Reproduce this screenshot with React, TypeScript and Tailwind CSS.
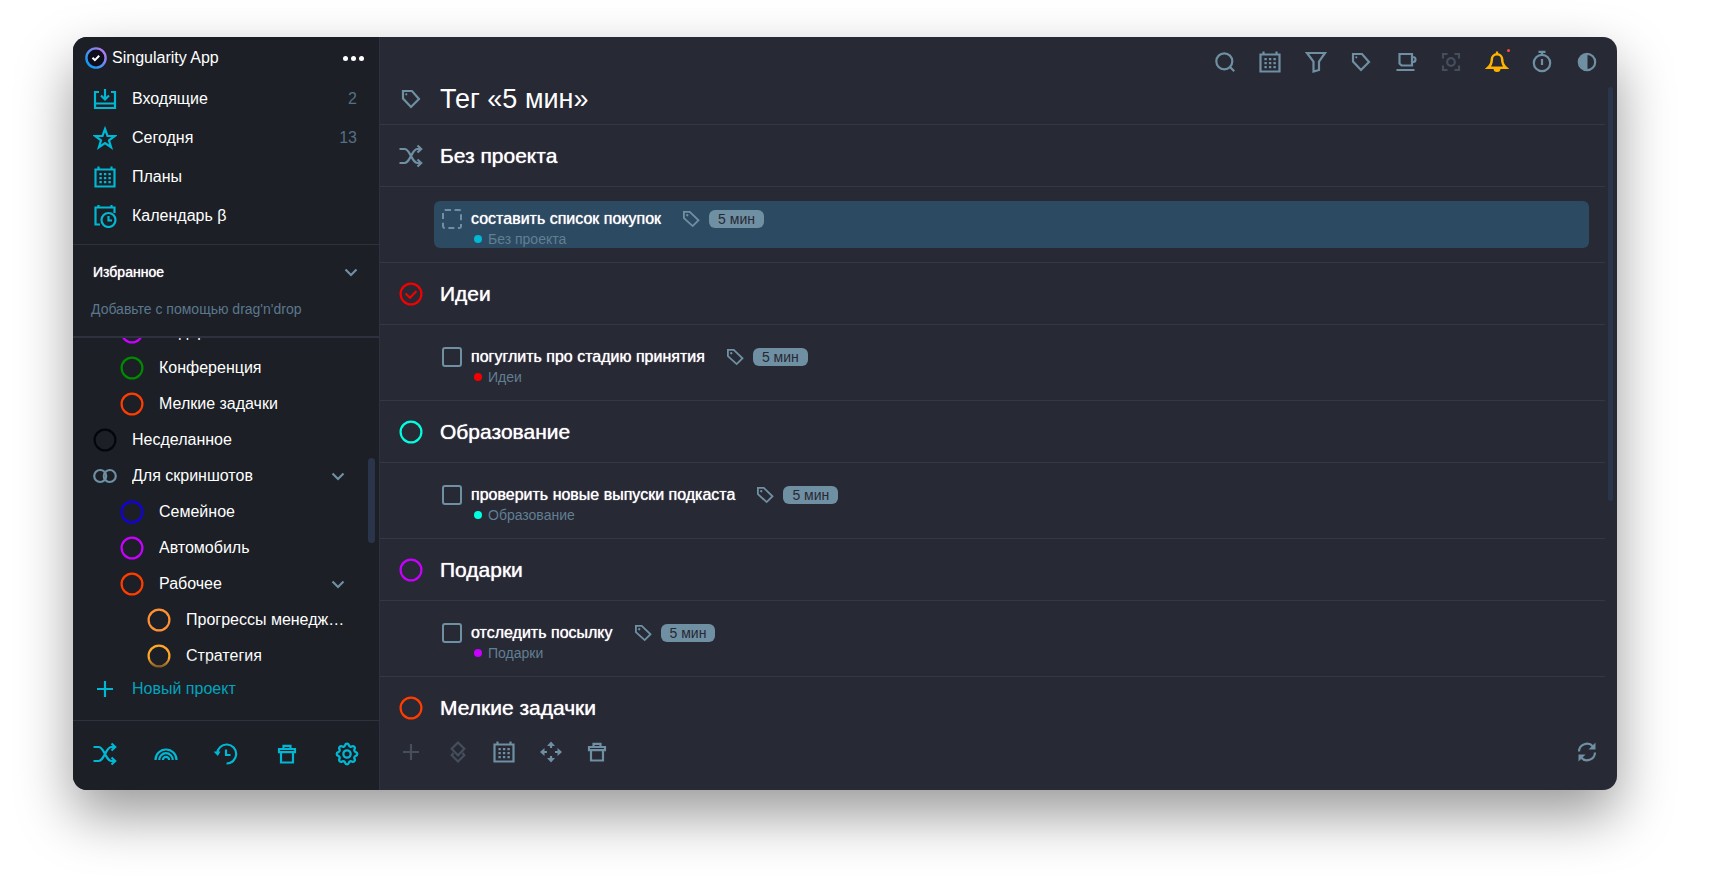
import React, { useState } from "react";

interface IconProps {
  size?: number;
  className?: string;
}

interface Project {
  name: string;
  color: string;
  level: number;
  group?: boolean;
  open?: boolean;
}

interface Section {
  title: string;
  color: string;
  icon: "shuffle" | "check" | "circle";
  task?: string;
  selected?: boolean;
}

const Svg: React.FC<IconProps & { children: React.ReactNode; box?: string }> = ({
  size = 24,
  className = "",
  box = "0 0 24 24",
  children,
}) => (
  <svg
    width={size}
    height={size}
    viewBox={box}
    fill="none"
    stroke="currentColor"
    strokeWidth={2.2}
    className={`shrink-0 ${className}`}
    aria-hidden="true"
  >
    {children}
  </svg>
);

const Logo = () => (
  <svg width={22} height={22} viewBox="0 0 22 22" fill="none" className="shrink-0" aria-hidden="true">
    <defs>
      <linearGradient id="ring" x1="3" y1="18" x2="18" y2="4" gradientUnits="userSpaceOnUse">
        <stop offset="0" stopColor="#0a9cf5" />
        <stop offset="0.5" stopColor="#5c8cf0" />
        <stop offset="1" stopColor="#b07af0" />
      </linearGradient>
    </defs>
    <circle cx="11" cy="11" r="9.6" fill="#0d0f1c" stroke="url(#ring)" strokeWidth="2.4" />
    <path d="M7.5 10.8l2.4 2.4 4.3-4.4" stroke="#fff" strokeWidth="2" />
  </svg>
);

const InboxIcon = (p: IconProps) => (
  <Svg {...p}>
    <path d="M6 5H2v16h20V5h-4M2 16.5h20M12 2v10M8 8.5l4 4 4-4" />
  </Svg>
);

const StarIcon = (p: IconProps) => (
  <Svg {...p}>
    <path d="M12 3l2.5 6.8 7.2.2-5.7 4.3 2.1 6.9L12 17l-6.1 4.2L8 14.3 2.3 10l7.2-.2z" />
  </Svg>
);

const CalendarIcon = (p: IconProps) => (
  <Svg {...p}>
    <path d="M2.5 4.5h19v17h-19zM5.5 1.5v3M18.5 1.5v3" />
    <path d="M6.4 9.2h11.400M6.4 13.2h11.400M6.4 17.2h11.400" strokeDasharray="2.4 2.1" />
  </Svg>
);

const CalendarClockIcon = (p: IconProps) => (
  <Svg {...p}>
    <path d="M7 20.5H2.5v-17h19V9M5.5 1v2.5M18.5 1v2.5" />
    <circle cx="15.5" cy="16" r="7" />
    <path d="M15.5 12v4.500H19" />
  </Svg>
);

const GroupIcon = (p: IconProps) => (
  <Svg {...p}>
    <circle cx="7.2" cy="12" r="6" />
    <path d="M12.300 8a6 6 0 1 1 0 8M12.300 8a6 6 0 0 0 0 8" />
  </Svg>
);

const ShuffleIcon = (p: IconProps) => (
  <Svg {...p}>
    <path d="M.5 5h5c3.200 0 4.500 3.500 6.500 7s3.300 7 6.500 7h3.500M.5 19h5c3.200 0 4.500-3.500 6.500-7s3.300-7 6.500-7h3.500" />
    <path d="M18.500 1.500L22.200 5l-3.700 3.500M18.500 15.500l3.700 3.500-3.700 3.500" />
  </Svg>
);

const RainbowIcon = (p: IconProps) => (
  <Svg {...p}>
    <path d="M1.500 18a10.500 10.500 0 0 1 21 0M5.200 18a6.800 6.800 0 0 1 13.600 0M8.900 18a3.100 3.100 0 0 1 6.200 0" />
  </Svg>
);

const HistoryIcon = (p: IconProps) => (
  <Svg {...p}>
    <path d="M3.200 11.500a9.500 9.500 0 1 1 9.300 10M12 7.500v5.500h4.500" />
    <path d="M-.5 9.500h7L3.800 14z" fill="currentColor" stroke="none" />
  </Svg>
);

const TrashIcon = (p: IconProps) => (
  <Svg {...p}>
    <path d="M4 7h16v3.200H4zM8.500 7V3.800h7V7M6 10v10.500h12V10" />
  </Svg>
);

const GearIcon = (p: IconProps) => (
  <Svg {...p} box="1.5 1.5 21 21">
    <path
      strokeWidth={2}
      d="M10.325 4.317c.426 -1.756 2.924 -1.756 3.35 0a1.724 1.724 0 0 0 2.573 1.066c1.543 -.94 3.31 .826 2.37 2.37a1.724 1.724 0 0 0 1.065 2.572c1.756 .426 1.756 2.924 0 3.35a1.724 1.724 0 0 0 -1.066 2.573c.94 1.543 -.826 3.31 -2.37 2.37a1.724 1.724 0 0 0 -2.572 1.065c-.426 1.756 -2.924 1.756 -3.35 0a1.724 1.724 0 0 0 -2.573 -1.066c-1.543 .94 -3.31 -.826 -2.37 -2.37a1.724 1.724 0 0 0 -1.065 -2.572c-1.756 -.426 -1.756 -2.924 0 -3.35a1.724 1.724 0 0 0 1.066 -2.573c-.94 -1.543 .826 -3.31 2.37 -2.37c1 .608 2.296 .07 2.572 -1.065z"
    />
    <circle cx="12" cy="12" r="3.2" strokeWidth={2} />
  </Svg>
);

const TagIcon = (p: IconProps) => (
  <Svg {...p}>
    <path d="M4 4h9l7 8-8 8-8-8.5z" />
    <circle cx="7.3" cy="7.300" r="1.100" fill="currentColor" stroke="none" />
  </Svg>
);

const SmallTagIcon = (p: IconProps) => (
  <Svg {...p}>
    <path d="M3.500 3.500h7l10.500 10-7 7L3.500 11z" />
    <circle cx="7.500" cy="7.500" r="1.400" fill="currentColor" stroke="none" />
  </Svg>
);

const SearchIcon = (p: IconProps) => (
  <Svg {...p}>
    <circle cx="11.300" cy="11.300" r="8" />
    <path d="M16.500 16.500l4.700 4.700" />
  </Svg>
);

const FilterIcon = (p: IconProps) => (
  <Svg {...p}>
    <path d="M3 3h18l-6 8.500V20l-5.500 1.500v-10z" />
  </Svg>
);

const CupIcon = (p: IconProps) => (
  <Svg {...p}>
    <path d="M5.500 4H18v11.500H7.500l-2-2zM18 7h1a2.500 2.500 0 0 1 0 5h-1M2.500 20h18" />
  </Svg>
);

const FocusIcon = (p: IconProps) => (
  <Svg {...p}>
    <path d="M4 8.500V4h4.500M15.500 4H20v4.500M20 15.500V20h-4.500M8.500 20H4v-4.500" />
    <circle cx="12" cy="12" r="3.800" />
  </Svg>
);

const BellIcon = (p: IconProps) => (
  <Svg {...p}>
    <path
      strokeWidth={2.500}
      d="M3 17.800c3-2.500 3.800-4 3.800-8.300a5.200 5.200 0 0 1 10.400 0c0 4.300.8 5.800 3.800 8.300z"
    />
    <path d="M8.500 18.500a3.500 3.500 0 0 0 7 0z" fill="currentColor" stroke="none" />
    <path d="M12 1.500v3" />
  </Svg>
);

const TimerIcon = (p: IconProps) => (
  <Svg {...p}>
    <circle cx="12" cy="13" r="8.200" />
    <path d="M8.500 1.800h7M12 1.500V5M12 9v6" />
  </Svg>
);

const ContrastIcon = (p: IconProps) => (
  <Svg {...p}>
    <circle cx="12" cy="12" r="8.200" />
    <path d="M12.500 4a8 8 0 0 0 0 16z" fill="currentColor" stroke="none" />
  </Svg>
);

const PlusIcon = (p: IconProps) => (
  <Svg {...p}>
    <path d="M12 4v16M4 12h16" />
  </Svg>
);

const LayersIcon = (p: IconProps) => (
  <Svg {...p}>
    <path d="M12 2.500l6.300 6.300L12 15.500 5.700 8.800zM7.500 13l-1.800 2.200L12 21.500l6.300-6.300L16.500 13" />
  </Svg>
);

const MoveIcon = (p: IconProps) => (
  <Svg {...p}>
    <path d="M12 4v4M12 16v4M4 12h4M16 12h4" />
    <path
      d="M12 1.500L16 6H8zM12 22.500L16 18H8zM1 12l4.500-4v8zM23 12l-4.500-4v8z"
      fill="currentColor"
      stroke="none"
    />
  </Svg>
);

const SyncIcon = (p: IconProps) => (
  <Svg {...p}>
    <path d="M4 11.500a8 8 0 0 1 14-5M20 12.500a8 8 0 0 1-14 5" />
    <path d="M20.500 2.500v7h-7zM3.500 21.500v-7h7z" fill="currentColor" stroke="none" />
  </Svg>
);

const ChevronIcon = (p: IconProps) => (
  <Svg {...p} size={14} box="0 0 14 14">
    <path d="M1.500 4.500L7 10l5.500-5.500" />
  </Svg>
);

const RingIcon = ({ color, check }: { color: string; check?: boolean }) => (
  <svg
    width={24}
    height={24}
    viewBox="0 0 24 24"
    fill="none"
    stroke={color}
    strokeWidth={2.2}
    className="shrink-0"
    aria-hidden="true"
  >
    <circle cx="12" cy="12" r="10.400" />
    {check && <path d="M6.500 11.500l4.500 4.200 6.500-6.700" />}
  </svg>
);

const navItems = [
  { label: "Входящие", Icon: InboxIcon, count: 2 },
  { label: "Сегодня", Icon: StarIcon, count: 13 },
  { label: "Планы", Icon: CalendarIcon },
  { label: "Календарь β", Icon: CalendarClockIcon },
];

const projects: Project[] = [
  { name: "Подарки", color: "#c800ff", level: 1 },
  { name: "Конференция", color: "#008a00", level: 1 },
  { name: "Мелкие задачки", color: "#ff3d00", level: 1 },
  { name: "Несделанное", color: "#05060c", level: 0 },
  { name: "Для скриншотов", color: "#6f8fa3", level: 0, group: true, open: true },
  { name: "Семейное", color: "#1200e0", level: 1 },
  { name: "Автомобиль", color: "#c800ff", level: 1 },
  { name: "Рабочее", color: "#ff3d00", level: 1, open: true },
  { name: "Прогрессы менеджмента", color: "#ff9133", level: 2 },
  { name: "Стратегия", color: "#ffa726", level: 2 },
];

const sections: Section[] = [
  { title: "Без проекта", color: "#00b8d4", icon: "shuffle", task: "составить список покупок", selected: true },
  { title: "Идеи", color: "#f50000", icon: "check", task: "погуглить про стадию принятия" },
  { title: "Образование", color: "#00ffe0", icon: "circle", task: "проверить новые выпуски подкаста" },
  { title: "Подарки", color: "#c800ff", icon: "circle", task: "отследить посылку" },
  { title: "Мелкие задачки", color: "#ff3d00", icon: "circle" },
];

const indents = ["pl-5", "pl-[47px]", "pl-[74px]"];

const bottomNav = [
  { label: "Без проекта", Icon: ShuffleIcon },
  { label: "Радуга", Icon: RainbowIcon },
  { label: "История", Icon: HistoryIcon },
  { label: "Корзина", Icon: TrashIcon },
  { label: "Настройки", Icon: GearIcon },
];

const topTools = [
  { label: "Поиск", Icon: SearchIcon },
  { label: "Планы", Icon: CalendarIcon },
  { label: "Фильтр", Icon: FilterIcon },
  { label: "Теги", Icon: TagIcon },
  { label: "Перерыв", Icon: CupIcon },
  { label: "Фокус", Icon: FocusIcon, tone: "text-[#454e5d]" },
  { label: "Уведомления", Icon: BellIcon, tone: "text-[#ffb300]", dot: true },
  { label: "Таймер", Icon: TimerIcon },
  { label: "Тема", Icon: ContrastIcon },
];

const taskTools = [
  { label: "Добавить", Icon: PlusIcon, tone: "text-[#454e5d]" },
  { label: "Приоритет", Icon: LayersIcon, tone: "text-[#454e5d]" },
  { label: "Дата", Icon: CalendarIcon },
  { label: "Переместить", Icon: MoveIcon },
  { label: "Удалить", Icon: TrashIcon },
];

const Sidebar = () => (
  <aside className="flex w-[307px] shrink-0 flex-col border-r border-[#2f323e] bg-[#1c1f26] text-base text-white">
    <div className="flex h-[42px] items-center gap-[5px] pr-[15px] pl-3">
      <Logo />
      <span>Singularity App</span>
      <button type="button" aria-label="Меню" className="ml-auto flex gap-[3px]">
        <span className="size-[5px] rounded-full bg-white" />
        <span className="size-[5px] rounded-full bg-white" />
        <span className="size-[5px] rounded-full bg-white" />
      </button>
    </div>

    <nav className="pb-[9px]">
      {navItems.map(({ label, Icon, count }) => (
        <button key={label} type="button" className="flex h-[39px] w-full items-center gap-[15px] pr-[22px] pl-5">
          <Icon className="text-[#00b8d4]" />
          <span>{label}</span>
          {count && <span className="ml-auto text-[#566f82]">{count}</span>}
        </button>
      ))}
    </nav>

    <div className="border-t border-b-2 border-[#2f323e] pt-[9px] pb-2">
      <button
        type="button"
        className="flex h-9 w-full items-center justify-between pr-[21px] pl-5 text-sm text-shadow-[0_0_1px_#fff]"
      >
        Избранное
        <ChevronIcon className="text-[#6f8fa3]" />
      </button>
      <p className="flex h-[38px] items-center pl-[18px] text-sm text-[#5b788c]">Добавьте с помощью drag'n'drop</p>
    </div>

    <div className="relative flex min-h-0 flex-1 flex-col justify-end overflow-hidden">
      {projects.map((p) => (
        <button
          key={p.name}
          type="button"
          className={`flex h-9 w-full shrink-0 items-center gap-[15px] pr-[34px] text-left ${indents[p.level]}`}
        >
          {p.group ? <GroupIcon className="text-[#6f8fa3]" /> : <RingIcon color={p.color} />}
          <span className="min-w-0 flex-1 truncate">{p.name}</span>
          {p.open && <ChevronIcon className="text-[#6f8fa3]" />}
        </button>
      ))}
      <div className="pointer-events-none absolute inset-x-0 bottom-0 h-4 bg-linear-to-t from-[#1c1f26] to-transparent" />
      <div className="absolute top-[120px] right-[4px] h-[85px] w-[7px] rounded-full bg-[#2a354b]" />
    </div>

    <button type="button" className="mb-4 flex h-[30px] items-center gap-[15px] pl-5 text-[#00a5bf]">
      <PlusIcon className="text-[#00b8d4]" />
      Новый проект
    </button>

    <div className="flex h-[70px] items-center justify-between border-t border-[#2f323e] pr-5 pb-1 pl-5 text-[#00b8d4]">
      {bottomNav.map(({ label, Icon }) => (
        <button key={label} type="button" aria-label={label}>
          <Icon />
        </button>
      ))}
    </div>
  </aside>
);

const TaskRow = ({ section, id }: { section: Section; id: string }) => {
  const [done, setDone] = useState(false);

  return (
    <div className="border-t border-[#343744] py-[14px] pr-4 pl-[54px]">
      <div className={`flex gap-[9px] rounded-md pt-2 pl-2 ${section.selected ? "bg-[#2c4a61]" : ""}`}>
        <input
          id={id}
          type="checkbox"
          checked={done}
          onChange={(e) => setDone(e.target.checked)}
          className={`size-5 shrink-0 appearance-none rounded-[3px] border-2 border-[#6f8fa3] checked:bg-[#6f8fa3] ${
            section.selected ? "border-dashed" : ""
          }`}
        />
        <div>
          <div className="flex h-5 items-center">
            <label htmlFor={id} className="text-base text-white text-shadow-[0_0_1px_#fff]">
              {section.task}
            </label>
            <SmallTagIcon size={20} className="ml-5 text-[#6f8fa3]" />
            <span className="ml-2 flex h-[18px] items-center rounded-md bg-[#6f8fa3] px-[9px] text-sm text-[#272934]">
              5 мин
            </span>
          </div>
          <div className="flex h-[19px] items-center gap-[6px] pl-[3px] text-sm text-[#627f93]">
            <span className="size-2 rounded-full" style={{ backgroundColor: section.color }} />
            {section.title}
          </div>
        </div>
      </div>
    </div>
  );
};

const App: React.FC = () => {
  return (
    <div className="flex h-screen bg-white pt-[37px] pr-[97px] pb-[102px] pl-[73px] font-['Liberation_Sans',Arial,sans-serif]">
      <div className="flex min-w-0 flex-1 overflow-hidden rounded-[14px] bg-[#272934] shadow-[0_25px_55px_rgba(0,0,0,0.4)]">
        <Sidebar />

        <main className="relative flex min-w-0 flex-1 flex-col">
          <header className="shrink-0">
            <div className="flex h-[50px] items-center justify-end pr-[18px]">
              <div className="flex w-[386px] justify-between text-[#6f8fa3]">
                {topTools.map(({ label, Icon, tone, dot }) => (
                  <button key={label} type="button" aria-label={label} className={`relative ${tone ?? ""}`}>
                    <Icon />
                    {dot && <span className="absolute -top-px -right-px size-[3px] rounded-full bg-[#ff4b3a]" />}
                  </button>
                ))}
              </div>
            </div>
            <div className="flex h-[37px] items-start gap-[17px] pl-[19px]">
              <TagIcon className="text-[#6f8fa3]" />
              <h1 className="text-[27px] leading-6 text-white">Тег «5 мин»</h1>
            </div>
          </header>

          <div className="mr-3 min-h-0 flex-1 overflow-hidden">
            {sections.map((section, i) => (
              <section key={section.title}>
                <div className="flex h-[62px] items-center gap-[17px] border-t border-[#343744] pl-[19px]">
                  {section.icon === "shuffle" ? (
                    <ShuffleIcon className="text-[#6f8fa3]" />
                  ) : (
                    <RingIcon color={section.color} check={section.icon === "check"} />
                  )}
                  <h2 className="text-[21px] leading-7 text-white text-shadow-[0_0_1px_#fff]">{section.title}</h2>
                </div>
                {section.task && <TaskRow section={section} id={`task-${i}`} />}
              </section>
            ))}
          </div>

          <footer className="flex h-[50px] shrink-0 items-start justify-between pr-[18px] pl-[19px] text-[#6f8fa3]">
            <div className="flex w-[210px] justify-between">
              {taskTools.map(({ label, Icon, tone }) => (
                <button key={label} type="button" aria-label={label} className={tone}>
                  <Icon />
                </button>
              ))}
            </div>
            <button type="button" aria-label="Синхронизация">
              <SyncIcon />
            </button>
          </footer>

          <div className="absolute top-[50px] right-[4px] h-[414px] w-[5px] rounded-full bg-[#2a354b]" />
        </main>
      </div>
    </div>
  );
};

export default App;
